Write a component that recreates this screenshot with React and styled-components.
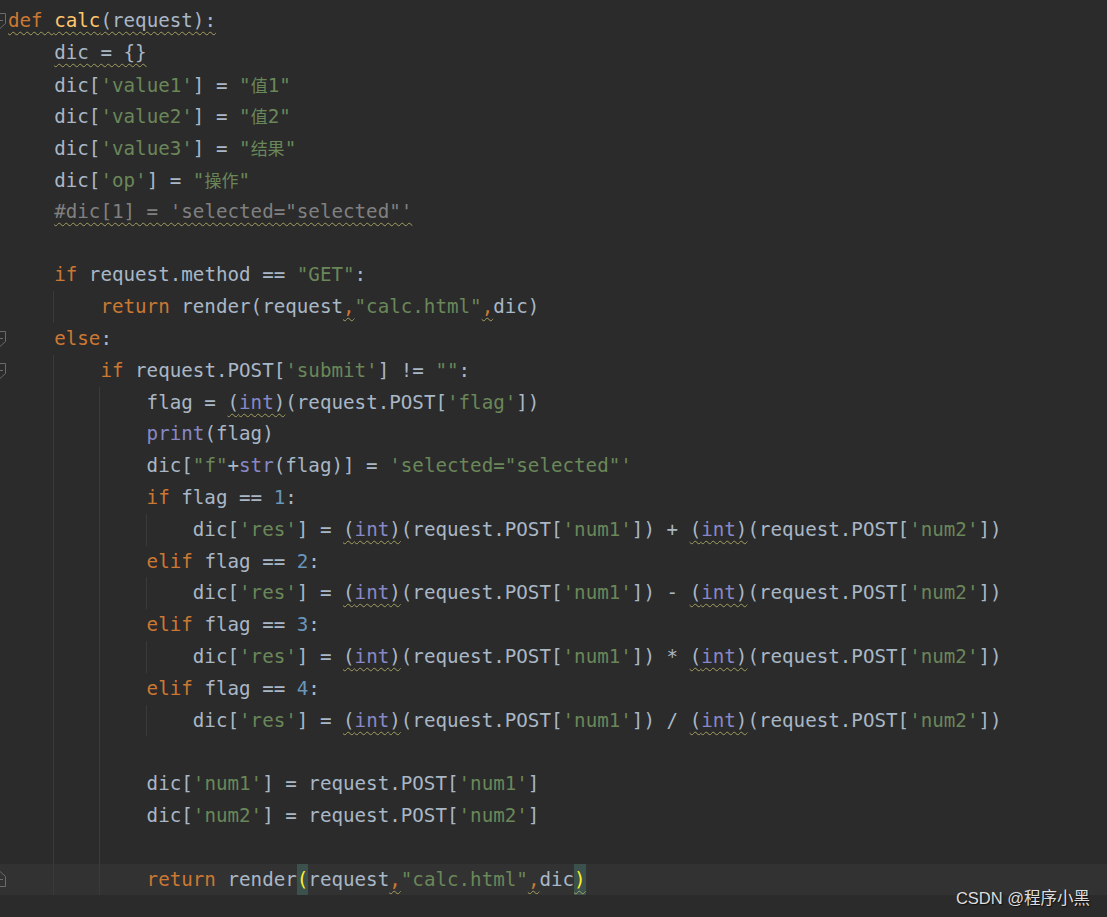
import React from 'react';
import styled, { createGlobalStyle } from 'styled-components';

const GlobalStyle = createGlobalStyle`
	html, body {
		margin: 0;
		padding: 0;
		background: #2b2b2b;
	}
	body {
		overflow: hidden;
	}
`

const Editor = styled.div`
	position: relative;
	height: 100vh;
	box-sizing: border-box;
	padding-top: 5px;
	background: #2b2b2b;
	color: #a9b7c6;
	font-family: "DejaVu Sans Mono", monospace;
	font-size: 19.2px;
	line-height: 31.8px;
	white-space: pre;
	overflow: hidden;
`

const Row = styled.div`
	display: flex;
	height: 31.8px;
	background: ${ ({ $current }) => $current ? '#323232' : 'transparent' };
`

const Gutter = styled.div`
	flex: none;
	width: 8px;
	display: flex;
	align-items: center;
	overflow: hidden;
	& svg {
		flex: none;
		margin-left: -6px;
	}
`

const Indent = styled.span`
	flex: none;
	display: inline-block;
	width: 4ch;
	height: 100%;
	box-shadow: ${ ({ $guide }) => $guide ? 'inset 1px 0 0 #3a3a3a' : 'none' };
	margin-left: ${ ({ $guide }) => $guide ? '-1px' : '0' };
	padding-left: ${ ({ $guide }) => $guide ? '1px' : '0' };
`

const Code = styled.span`
	flex: none;
`

const K = styled.span`
	color: #cc7832;
`

const Fn = styled.span`
	color: #ffc66d;
`

const S = styled.span`
	color: #6a8759;
`

const N = styled.span`
	color: #6897bb;
`

const B = styled.span`
	color: #8888c6;
`

const C = styled.span`
	color: #808080;
`

const Han = styled.span`
	font-family: "Noto Sans CJK SC", sans-serif;
	font-size: 17px;
`

const Warn = styled.span`
	text-decoration: underline wavy #a39f60;
	text-decoration-thickness: 1px;
	text-underline-offset: 4px;
	text-decoration-skip-ink: none;
`

const Match = styled.span`
	display: inline-block;
	background: #3b514d;
	color: #ffef28;
`

const Watermark = styled.div`
	position: absolute;
	right: 17px;
	bottom: 10px;
	font-family: "Liberation Sans", "Noto Sans CJK SC", sans-serif;
	font-size: 16.5px;
	line-height: 18px;
	color: #dedede;
	text-shadow: 1px 1px 1px #111;
`

const FoldOpen = () => (
	<svg width="12" height="16" viewBox="0 0 12 16">
		<path d="M0.5 0.5 H11.5 V10.5 L6 15.5 L0.5 10.5 Z" fill="none" stroke="#6b6b6b" />
		<path d="M3 7.5 H9" stroke="#6b6b6b" />
	</svg>
)

const FoldEnd = () => (
	<svg width="12" height="16" viewBox="0 0 12 16">
		<path d="M0.5 15.5 H11.5 V5.5 L6 0.5 L0.5 5.5 Z" fill="none" stroke="#6b6b6b" />
		<path d="M3 8.5 H9" stroke="#6b6b6b" />
	</svg>
)

const Line = ({ depth = 0, guides = [], fold, current, children }) => (
	<Row $current={current}>
		<Gutter>
			{ fold === 'open' && <FoldOpen /> }
			{ fold === 'end' && <FoldEnd /> }
		</Gutter>
		{ Array.from({ length: depth }, (_, i) => (
			<Indent key={i} $guide={guides.includes(i)} />
		)) }
		<Code>{children}</Code>
	</Row>
)

const Int = () => <Warn>(<B>int</B>)</Warn>

const Comma = () => <Warn><K>,</K></Warn>

const Res = ({ op }) => (
	<Line depth={4} guides={[1, 2, 3]}>
		dic[<S>'res'</S>] = <Int />(request.POST[<S>'num1'</S>]) {op} <Int />(request.POST[<S>'num2'</S>])
	</Line>
)

const Elif = ({ n }) => (
	<Line depth={3} guides={[1, 2]}>
		<K>elif</K> flag == <N>{n}</N>:
	</Line>
)

export default function App() {
	return (
		<Editor>
			<GlobalStyle />
			<Line fold="open">
				<Warn><K>def</K> <Fn>calc</Fn>(request):</Warn>
			</Line>
			<Line depth={1}><Warn>dic = {'{}'}</Warn></Line>
			<Line depth={1}>dic[<S>'value1'</S>] = <S>"<Han>值</Han>1"</S></Line>
			<Line depth={1}>dic[<S>'value2'</S>] = <S>"<Han>值</Han>2"</S></Line>
			<Line depth={1}>dic[<S>'value3'</S>] = <S>"<Han>结果</Han>"</S></Line>
			<Line depth={1}>dic[<S>'op'</S>] = <S>"<Han>操作</Han>"</S></Line>
			<Line depth={1}><Warn><C>#dic[1] = 'selected="selected"'</C></Warn></Line>
			<Line />
			<Line depth={1}><K>if</K> request.method == <S>"GET"</S>:</Line>
			<Line depth={2} guides={[1]}>
				<K>return</K> render(request<Comma /><S>"calc.html"</S><Comma />dic)
			</Line>
			<Line depth={1} fold="open"><K>else</K>:</Line>
			<Line depth={2} guides={[1]} fold="open">
				<K>if</K> request.POST[<S>'submit'</S>] != <S>""</S>:
			</Line>
			<Line depth={3} guides={[1, 2]}>
				flag = <Int />(request.POST[<S>'flag'</S>])
			</Line>
			<Line depth={3} guides={[1, 2]}><B>print</B>(flag)</Line>
			<Line depth={3} guides={[1, 2]}>
				dic[<S>"f"</S>+<B>str</B>(flag)] = <S>'selected="selected"'</S>
			</Line>
			<Line depth={3} guides={[1, 2]}><K>if</K> flag == <N>1</N>:</Line>
			<Res op="+" />
			<Elif n={2} />
			<Res op="-" />
			<Elif n={3} />
			<Res op="*" />
			<Elif n={4} />
			<Res op="/" />
			<Line depth={3} guides={[1, 2]} />
			<Line depth={3} guides={[1, 2]}>
				dic[<S>'num1'</S>] = request.POST[<S>'num1'</S>]
			</Line>
			<Line depth={3} guides={[1, 2]}>
				dic[<S>'num2'</S>] = request.POST[<S>'num2'</S>]
			</Line>
			<Line depth={3} guides={[1, 2]} />
			<Line depth={3} guides={[1, 2]} fold="end" current>
				<K>return</K> render<Match>(</Match>request<Comma /><S>"calc.html"</S><Comma />dic<Match><Warn>)</Warn></Match>
			</Line>
			<Watermark>CSDN @程序小黑</Watermark>
		</Editor>
	)
}
